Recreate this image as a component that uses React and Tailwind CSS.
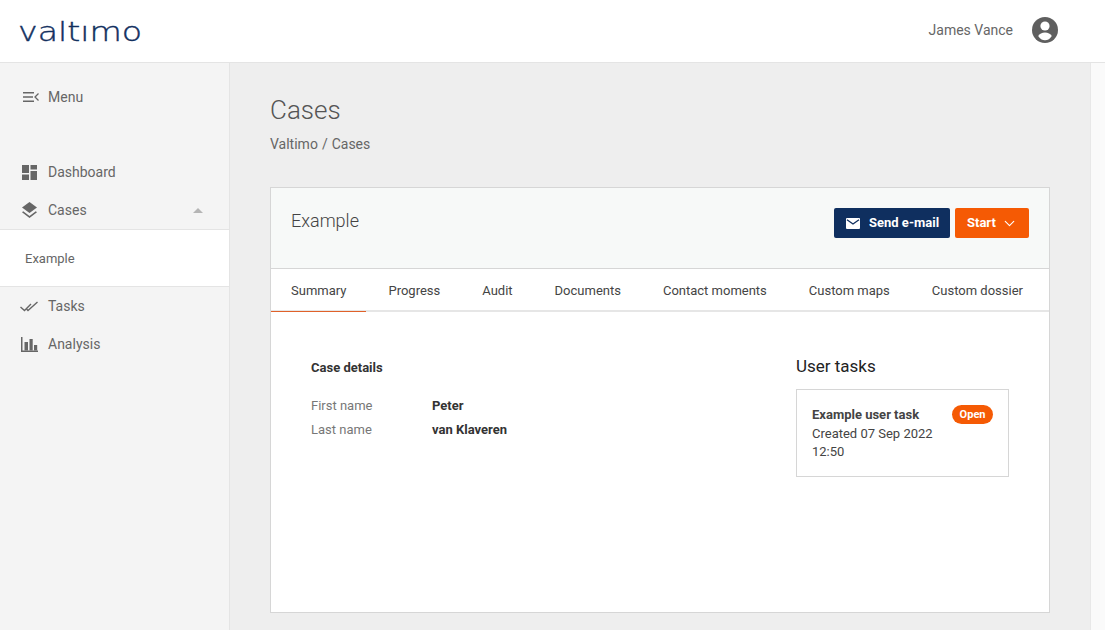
import React from 'react';
import { ChevronDown } from 'lucide-react';

const tabs = ['Summary', 'Progress', 'Audit', 'Documents', 'Contact moments', 'Custom maps', 'Custom dossier'];

function MenuIcon() {
  return (
    <svg width="16" height="10" viewBox="0 0 16 10" fill="none" stroke="#666" strokeWidth="1.5" className="ml-[0.5px]">
      <path d="M0 .75h11M0 5h10M0 9.250h11" />
      <path d="M15.500 1.500 12 5l3.500 3.500" strokeWidth="1.300" />
    </svg>
  );
}

function DashboardIcon() {
  return (
    <svg width="15" height="15" viewBox="0 0 15 15" fill="#666">
      <path d="M0 0h7v8H0zM8.500 0H15v4.500H8.500zM8.500 6H15v9H8.500zM0 9.500h7V15H0z" />
    </svg>
  );
}

function LayersIcon() {
  return (
    <svg width="15" height="16" viewBox="0 0 15 16" fill="#666">
      <path d="M7.500 0 15 5.500 7.500 11 0 5.500z" />
      <path d="M1.200 9.300 0 10.200 7.500 16l7.500-5.800-1.200-.9-6.300 4.800z" />
    </svg>
  );
}

function TasksIcon() {
  return (
    <svg width="18" height="11" viewBox="0 0 18 11" fill="none" stroke="#666" strokeWidth="1.400" className="-ml-[2px]">
      <path d="M.5 6 4.500 9.500 11 3" />
      <path d="M6.500 8 8 9.500 17.500 1" />
    </svg>
  );
}

function BarsIcon() {
  return (
    <svg width="17" height="15" viewBox="0 0 17 15" fill="#666" className="-ml-[1px]">
      <path d="M0 0h1.500v13.500H17V15H0z" />
      <path d="M3.500 5H7v8.500H3.500zM8.500 2h3.200v11.500H8.500zM13 8h3.200v5.500H13z" />
    </svg>
  );
}

function MailIcon() {
  return (
    <svg width="14" height="11" viewBox="0 0 14 11">
      <rect width="14" height="11" rx="1" fill="#fff" />
      <path d="M1 1.800 7 6l6-4.200" fill="none" stroke="#0f2f5f" strokeWidth="1.300" />
    </svg>
  );
}

function UserIcon() {
  return (
    <svg width="26" height="26" viewBox="0 0 26 26">
      <circle cx="13" cy="13" r="13" fill="#5f5f5f" />
      <circle cx="13" cy="9" r="4.600" fill="#fff" />
      <path d="M6.200 19C7.500 16.600 10 15.400 13 15.400s5.500 1.200 6.800 3.600C18.200 21.800 15.800 23.300 13 23.300S7.800 21.800 6.200 19z" fill="#fff" />
    </svg>
  );
}

function NavItem({ icon, label, children }) {
  return (
    <div className="h-[38px] flex items-center pl-[22px] pr-[26px]">
      <span className="w-[26px] flex items-center shrink-0">{icon}</span>
      <span className="text-[14px] text-[#666]">{label}</span>
      {children}
    </div>
  );
}

export default function App() {
  return (
    <div className="h-[630px] w-[1105px] overflow-hidden flex flex-col bg-white font-['Roboto',sans-serif]">
      <header className="h-[63px] shrink-0 bg-white border-b border-[#e4e4e4] flex items-center justify-between pl-[18px] pr-[47px]">
        <span className="font-['DejaVu_Sans',sans-serif] font-extralight text-[27px] leading-none text-[#12305f] [-webkit-text-stroke:0.4px_#12305f] origin-left scale-x-[1.23] mt-[1px]">valtımo</span>
        <div className="flex items-center gap-[19px] -mt-[2px]">
          <span className="text-[14px] text-[#666]">James Vance</span>
          <UserIcon />
        </div>
      </header>

      <div className="flex-1 flex min-h-0">
        <aside className="w-[230px] shrink-0 bg-[#f4f4f4] border-r border-[#e4e4e4] pt-[15px]">
          <NavItem icon={<MenuIcon />} label="Menu" />
          <div className="h-[37px]" />
          <NavItem icon={<DashboardIcon />} label="Dashboard" />
          <NavItem icon={<LayersIcon />} label="Cases">
            <span className="ml-auto w-0 h-0 border-x-[5px] border-x-transparent border-b-[5px] border-b-[#b5b5b5]" />
          </NavItem>
          <div className="h-[58px] bg-white border-y border-[#e4e4e4] flex items-center pl-[25px] pt-[1px] text-[13px] text-[#666]">
            Example
          </div>
          <NavItem icon={<TasksIcon />} label="Tasks" />
          <NavItem icon={<BarsIcon />} label="Analysis" />
        </aside>

        <main className="flex-1 bg-[#eeeeee] px-[40px] pt-[32px]">
          <h1 className="text-[26px] leading-[30px] font-light text-[#555]">Cases</h1>
          <div className="mt-[9px] flex gap-[4px] text-[14px] leading-[20px] text-[#666]">
            <span>Valtimo</span>
            <span>/</span>
            <span>Cases</span>
          </div>

          <section className="mt-[33px] h-[426px] bg-white border border-[#d6d6d6]">
            <div className="h-[81px] bg-[#f7f9f8] border-b border-[#d6d6d6] flex items-start justify-between px-[20px] pt-[20px]">
              <h2 className="text-[18px] leading-[26px] font-light text-[#444]">Example</h2>
              <div className="flex gap-[5px]">
                <button className="h-[30px] w-[116px] rounded-[2px] bg-[#0f2f5f] text-white text-[13px] font-bold flex items-center pl-[12px] gap-[9px]">
                  <MailIcon />
                  Send e-mail
                </button>
                <button className="h-[30px] w-[74px] rounded-[2px] bg-[#f55a04] text-white text-[13px] font-bold flex items-center pl-[12px] gap-[5px]">
                  Start
                  <ChevronDown size={17} strokeWidth={1.6} />
                </button>
              </div>
            </div>

            <nav className="h-[43px] flex border-b-2 border-[#e6e6e6]">
              {tabs.map((tab, i) => (
                <div
                  key={tab}
                  className={i === 0
                    ? 'h-[43px] px-[20px] pt-[2px] mr-[1px] flex items-center text-[13px] text-[#444] border-b-[1px] border-[#e0612a]'
                    : 'h-[42px] px-[21px] pt-[2px] flex items-center text-[13px] text-[#444]'}
                >
                  {tab}
                </div>
              ))}
            </nav>

            <div className="flex justify-between px-[40px] pt-[42px]">
              <div className="pt-[6px]">
                <h3 className="text-[13px] leading-[16px] font-bold text-[#333]">Case details</h3>
                <dl className="mt-[20px] grid grid-cols-[121px_auto] gap-y-[4px] text-[13px] leading-[20px]">
                  <dt className="text-[#777]">First name</dt>
                  <dd className="font-bold text-[#333]">Peter</dd>
                  <dt className="text-[#777]">Last name</dt>
                  <dd className="font-bold text-[#333]">van Klaveren</dd>
                </dl>
              </div>

              <div className="w-[213px]">
                <h3 className="text-[17px] leading-[24px] text-[#222]">User tasks</h3>
                <div className="mt-[11px] h-[88px] border border-[#d6d6d6] px-[15px] pt-[16px] flex justify-between items-start">
                  <div className="text-[13px] leading-[18.5px] text-[#444]">
                    <div className="font-bold">Example user task</div>
                    <div>Created 07 Sep 2022</div>
                    <div>12:50</div>
                  </div>
                  <span className="h-[19px] px-[7.500px] -mt-[1px] pt-[2px] rounded-full bg-[#f55a04] text-white text-[11px] font-bold flex items-center">Open</span>
                </div>
              </div>
            </div>
          </section>
        </main>

        <div className="w-[15px] shrink-0 bg-[#fafafa] border-l border-[#e8e8e8]" />
      </div>
    </div>
  );
}
